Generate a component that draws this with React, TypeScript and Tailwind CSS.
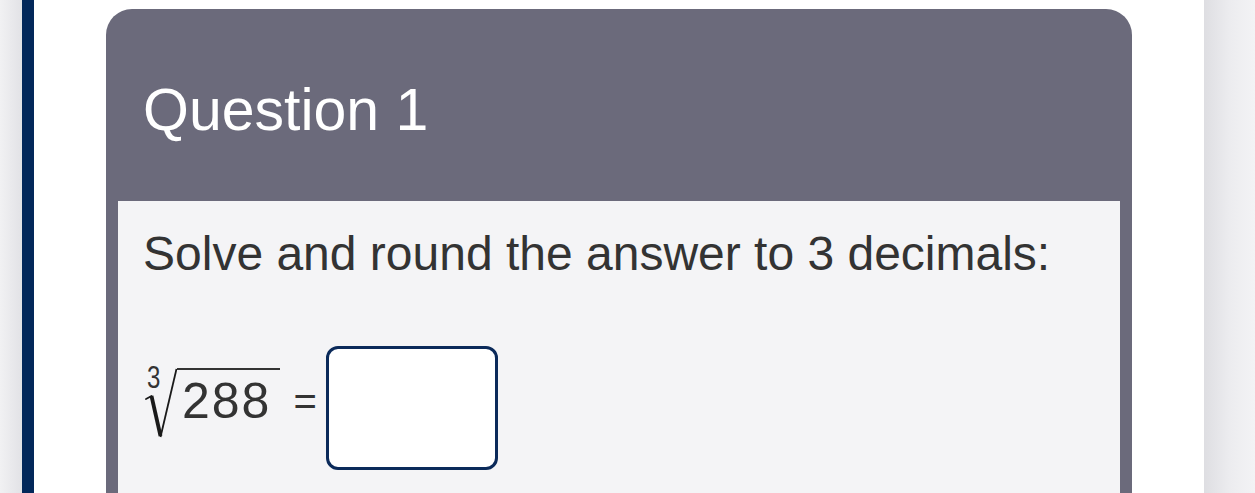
export default function App() {
  return (
    <div className="flex h-[493px] w-[1255px] overflow-hidden bg-white font-['Liberation_Sans',Arial,sans-serif]">
      <div className="w-[22px] shrink-0 bg-gradient-to-r from-[#f1f1f3] to-[#e2e2e6]" />
      <div className="w-[12px] shrink-0 bg-[#03285a]" />

      <main className="flex-1 px-[72px] pt-[9px]">
        <section className="rounded-t-[26px] bg-[#6b6a7b]">
          <header className="h-[192px] pl-[37px] pt-[66px]">
            <h1 className="text-[59px] leading-[1.2] text-white">Question 1</h1>
          </header>

          <div className="mx-[12px] h-[320px] bg-[#f4f4f6] pl-[25px] pt-[24px] text-[#333333]">
            <p className="text-[48px] leading-[58px]">Solve and round the answer to 3 decimals:</p>

            <div className="mt-[63px] flex items-start">
              {/* cube root of 288 */}
              <div className="relative mt-[19px] flex items-start">
                <span className="absolute left-[4px] top-[-4px] origin-left scale-x-75 text-[32px] leading-none">3</span>
                <svg width="34" height="75" viewBox="0 0 34 75" className="shrink-0">
                  <path d="M3 34 L8.5 31" stroke="#1a1a1a" strokeWidth="1.8" fill="none" strokeLinecap="round" />
                  <path d="M8.5 31 L17.5 71" stroke="#1a1a1a" strokeWidth="3.8" fill="none" />
                  <path d="M17.5 72 L33.5 4" stroke="#1a1a1a" strokeWidth="1.8" fill="none" />
                </svg>
                <span className="mt-[3px] border-t-2 border-[#333333] pl-[5px] pr-[9px] pt-[6px] text-[50px] leading-none tracking-[2px]">
                  288
                </span>
              </div>
              <span className="ml-[13px] mt-[35px] text-[40px] leading-none">=</span>
              <input
                type="text"
                aria-label="answer"
                className="ml-[9px] h-[124px] w-[172px] rounded-[12px] border-[3px] border-[#0b2a5a] bg-white outline-none"
              />
            </div>
          </div>
        </section>
      </main>

      <div className="w-[51px] shrink-0 bg-gradient-to-r from-[#dedee2] via-[#ececef] to-[#f3f3f5]" />
    </div>
  )
}
